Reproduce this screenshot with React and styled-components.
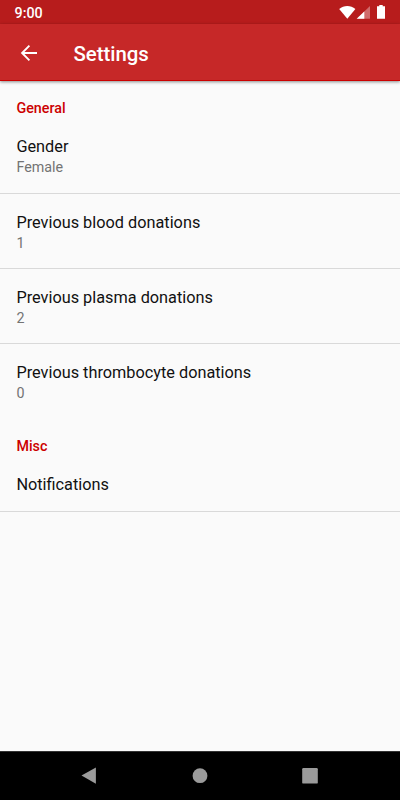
import React from "react";
import styled, { createGlobalStyle } from "styled-components";

const GlobalStyle = createGlobalStyle`
  * {
    box-sizing: border-box;
    margin: 0;
    padding: 0;
  }

  body {
    font-family: Roboto, "Liberation Sans", sans-serif;
    background-color: #fafafa;
  }
`;

const Screen = styled.div`
  width: 400px;
  height: 800px;
  display: flex;
  flex-flow: column;
  overflow: hidden;
  background-color: #fafafa;
`;

const StatusBar = styled.div`
  height: 24px;
  flex: none;
  display: flex;
  align-items: center;
  justify-content: space-between;
  padding: 2px 13px 0 14.5px;
  background-color: #b71c1c;
`;

const Clock = styled.span`
  color: #fff;
  font-size: 14.3px;
  font-weight: 500;
  line-height: 20px;
`;

const StatusIcons = styled.svg`
  width: 48px;
  height: 16px;
  display: block;
`;

const AppBar = styled.header`
  height: 57px;
  flex: none;
  display: flex;
  align-items: center;
  padding: 2px 0 0 20px;
  background-color: #c62828;
  border-bottom: 1px solid #cc0000;
  box-shadow: 0 1px 3px rgba(0, 0, 0, 0.45);
`;

const BackIcon = styled.svg`
  width: 18px;
  height: 18px;
`;

const Title = styled.h1`
  margin: 2px 0 0 35.4px;
  color: #fff;
  font-size: 20.4px;
  font-weight: 500;
  line-height: 28px;
`;

const Content = styled.main`
  flex: 1;
`;

const Category = styled.h2`
  height: 38px;
  padding: 17px 16.4px 0;
  color: #cc0000;
  font-size: 14.3px;
  font-weight: 500;
  line-height: 20px;
`;

const Preference = styled.div`
  height: ${({ $height }) => $height}px;
  padding: 18px 16.4px 0;
  border-bottom: 1px solid ${({ $last }) => ($last ? "transparent" : "#d9d9d9")};

  ${Category} + & {
    padding-top: 17px;
  }
`;

const PreferenceTitle = styled.p`
  color: #111;
  font-size: 16.3px;
  line-height: 22px;
`;

const Summary = styled.p`
  margin-top: -1px;
  color: #737373;
  font-size: 14.3px;
  line-height: 20px;
`;

const NavigationBar = styled.nav`
  height: 49px;
  flex: none;
  background-color: #000;
  border-top: 1px solid #333;
`;

const NavIcons = styled.svg`
  width: 400px;
  height: 48px;
  display: block;
`;

const SettingsItem = ({ title, summary, height = 75, last }) => (
  <Preference $height={height} $last={last}>
    <PreferenceTitle>{title}</PreferenceTitle>
    {summary && <Summary>{summary}</Summary>}
  </Preference>
);

const App = () => {
  return (
    <>
      <GlobalStyle />
      <Screen>
        <StatusBar>
          <Clock>9:00</Clock>
          <StatusIcons viewBox="0 0 48 16" fill="#fff">
            <path d="M.2 4C4.8.1 11.8.1 16.4 4L8.3 13.7Z" />
            <path d="M17.7 13.7L31 .9V13.7Z" opacity=".35" />
            <path d="M17.7 13.7L25.3 6.4V13.7Z" />
            <path d="M38 1.3H40.3V0H43.7V1.3H46V13.7H38Z" />
          </StatusIcons>
        </StatusBar>
        <AppBar>
          <BackIcon
            viewBox="0 0 18 18"
            fill="none"
            stroke="#fff"
            strokeWidth="1.9"
          >
            <path d="M17 9H2.4M9.4 1.7L2.1 9L9.4 16.3" />
          </BackIcon>
          <Title>Settings</Title>
        </AppBar>
        <Content>
          <Category>General</Category>
          <SettingsItem title="Gender" summary="Female" />
          <SettingsItem title="Previous blood donations" summary="1" />
          <SettingsItem title="Previous plasma donations" summary="2" />
          <SettingsItem
            title="Previous thrombocyte donations"
            summary="0"
            last
          />
          <Category>Misc</Category>
          <SettingsItem title="Notifications" height={55} />
        </Content>
        <NavigationBar>
          <NavIcons viewBox="0 0 400 48" fill="#9b9b9b">
            <path d="M81.5 23.6L95.9 15.4V31.8Z" />
            <circle cx="200" cy="23.7" r="7.4" />
            <rect x="302.2" y="16" width="15.6" height="15.6" rx="1.2" />
          </NavIcons>
        </NavigationBar>
      </Screen>
    </>
  );
};

export default App;
